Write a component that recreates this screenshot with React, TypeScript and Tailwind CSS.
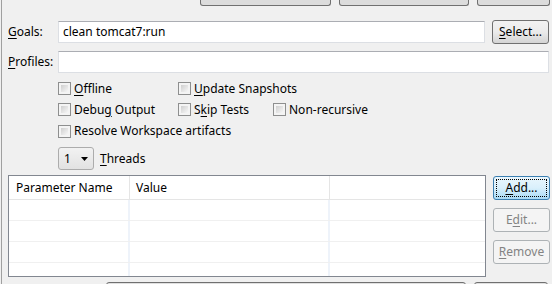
import React from "react";

const font = { fontFamily: '"Noto Sans", "Segoe UI", Arial, sans-serif' };

function Check({ label, u, pre = "", post = "" }: { label?: string; u?: string; pre?: string; post?: string }) {
  return (
    <div className="flex items-center h-full">
      <div className="w-[13px] h-[13px] border border-[#8e8f8f] bg-[#f4f4f4] p-[2px] shrink-0">
        <div className="w-full h-full bg-gradient-to-br from-[#cfcfcf] to-[#f7f7f7]" />
      </div>
      <span className="ml-[3px] text-[12px] text-black whitespace-nowrap">
        {pre}
        {u ? <span className="underline underline-offset-2">{u}</span> : null}
        {post}
        {label}
      </span>
    </div>
  );
}

function Btn({ children, kind = "normal", className = "" }: { children: React.ReactNode; kind?: "normal" | "focus" | "disabled"; className?: string }) {
  const base = "w-[57px] h-[24px] rounded-[3px] border flex items-center justify-center text-[12px]";
  if (kind === "focus")
    return (
      <div className={`${base} border-[#3c7fb1] bg-gradient-to-b from-[#eaf6fd] via-[#d9f0fc] to-[#a7d9f5] p-[2px] ${className}`}>
        <div className="w-full h-full border border-dotted border-black flex items-center justify-center text-[#000]">{children}</div>
      </div>
    );
  if (kind === "disabled")
    return <div className={`${base} border-[#adb2b5] bg-[#f4f4f4] text-[#838383] ${className}`}>{children}</div>;
  return <div className={`${base} border-[#707070] bg-gradient-to-b from-[#f2f2f2] via-[#ebebeb] to-[#d4d4d4] text-black ${className}`}>{children}</div>;
}

function U({ c }: { c: string }) {
  return <span className="underline underline-offset-2">{c}</span>;
}

export default function App() {
  return (
    <div className="w-[552px] h-[284px] bg-[#f0f0f0] overflow-hidden relative" style={font}>
      <div className="ml-[1px] border-l border-[#a0a0a0] h-full flex flex-col">
        {/* top buttons (clipped) */}
        <div className="flex h-[6px] shrink-0">
          <div className="ml-[198px] w-[131px] h-[6px] border border-t-0 border-[#707070] rounded-b-[3px] bg-[#dcdcdc]" />
          <div className="ml-[8px] w-[130px] h-[6px] border border-t-0 border-[#707070] rounded-b-[3px] bg-[#dcdcdc]" />
          <div className="ml-[8px] w-[73px] h-[6px] border border-t-0 border-[#707070] rounded-b-[3px] bg-[#dcdcdc]" />
        </div>

        {/* Goals */}
        <div className="flex items-center h-[24px] mt-[14px] shrink-0">
          <div className="w-[56px] pl-[6px] text-[12px] text-black">
            <U c="G" />oals:
          </div>
          <div className="w-[427px] h-[22px] border border-[#dcdfe4] border-t-[#abadb3] bg-white flex items-center pl-[4px] text-[12px] text-black">
            clean tomcat7:run
          </div>
          <Btn className="ml-[7px]">
            <span>
              <U c="S" />elect...
            </span>
          </Btn>
        </div>

        {/* Profiles */}
        <div className="flex items-center h-[22px] mt-[7px] shrink-0">
          <div className="w-[56px] pl-[6px] text-[12px] text-black">
            <U c="P" />rofiles:
          </div>
          <div className="w-[491px] h-[22px] border border-[#dcdfe4] border-t-[#abadb3] bg-white" />
        </div>

        {/* checkbox rows */}
        <div className="ml-[56px] mt-[5px] flex flex-col shrink-0">
          <div className="flex h-[21px]">
            <div className="w-[120px]">
              <Check u="O" post="ffline" />
            </div>
            <Check u="U" post="pdate Snapshots" />
          </div>
          <div className="flex h-[21px]">
            <div className="w-[120px]">
              <Check pre="Debu" u="g" post=" Output" />
            </div>
            <div className="w-[95px]">
              <Check pre="S" u="k" post="ip Tests" />
            </div>
            <Check label="Non-recursive" />
          </div>
          <div className="flex h-[22px]">
            <Check label="Resolve Workspace artifacts" />
          </div>
          <div className="flex items-center mt-[5px] h-[23px]">
            <div className="w-[36px] h-[23px] rounded-[3px] border border-[#acacac] bg-gradient-to-b from-[#f2f2f2] to-[#e2e2e2] flex items-center pl-[5px] text-[12px] text-black">
              <span>1</span>
              <svg className="ml-[10px]" width="7" height="4" viewBox="0 0 7 4">
                <path d="M0 0H7L3.5 4Z" fill="#000" />
              </svg>
            </div>
            <span className="ml-[6px] text-[12px] text-black">
              <U c="T" />hreads
            </span>
          </div>
        </div>

        {/* table + buttons */}
        <div className="flex mt-[5px] shrink-0">
          <div className="ml-[6px] w-[478px] h-[102px] border border-[#828790] bg-white flex flex-col">
            <div className="flex h-[24px] border-b border-[#e5e5e5] text-[12px] text-black shrink-0">
              <div className="w-[121px] pl-[7px] flex items-center border-r border-[#e5e5e5]">Parameter Name</div>
              <div className="w-[200px] pl-[6px] flex items-center border-r border-[#e5e5e5]">Value</div>
              <div className="flex-1" />
            </div>
            {[0, 1, 2, 3].map((i) => (
              <div key={i} className={`flex ${i < 3 ? "h-[21px] border-b border-[#f0f0f0]" : "flex-1"}`}>
                <div className="w-[121px] border-r-2 border-[#eef3fa]" />
                <div className="w-[200px] border-r-2 border-[#eef3fa]" />
                <div className="flex-1" />
              </div>
            ))}
          </div>
          <div className="ml-[7px] flex flex-col">
            <Btn kind="focus" className="mt-[1px]">
              <span>
                <U c="A" />dd...
              </span>
            </Btn>
            <Btn kind="disabled" className="mt-[8px]">
              <span>
                E<U c="d" />it...
              </span>
            </Btn>
            <Btn kind="disabled" className="mt-[8px]">
              <span>
                <U c="R" />emove
              </span>
            </Btn>
          </div>
        </div>

        {/* bottom clipped elements */}
        <div className="flex mt-[5px] shrink-0">
          <div className="ml-[104px] w-[360px] h-[10px] border border-[#707070] rounded-t-[3px] bg-[#e0e0e0]" />
          <div className="ml-[8px] w-[74px] h-[10px] border border-[#707070] rounded-t-[3px] bg-[#e0e0e0]" />
        </div>
      </div>
    </div>
  );
}
